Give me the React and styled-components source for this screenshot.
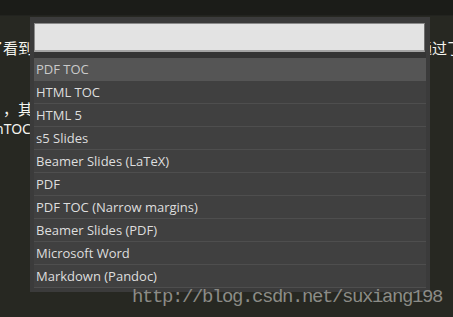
import React from "react";
import styled, { createGlobalStyle } from "styled-components";

const GlobalStyle = createGlobalStyle`
  html, body { margin: 0; padding: 0; background: #272822; overflow: hidden; }
`;

const Screen = styled.div`
  position: relative;
  width: 453px;
  height: 317px;
  overflow: hidden;
  background: #272822;
`;

const TopBar = styled.div`
  height: 15px;
  background: #1b1c18;
  border-bottom: 1px solid #22231f;
`;

const Editor = styled.div`
  width: 462px;
  padding-top: 22px;
  color: #f4f4ef;
  font-family: "Noto Sans CJK SC", "Noto Sans", sans-serif;
  font-size: 15px;
`;

const Line = styled.div`
  display: flex;
  align-items: center;
  height: 20.3px;
  line-height: 20px;
  white-space: nowrap;
`;

const Lead = styled.span`
  margin-left: ${(p) => p.$offset || 0}px;
  font-family: ${(p) =>
    p.$latin
      ? '"Noto Sans", "Noto Sans CJK SC", sans-serif'
      : '"Noto Sans CJK SC", sans-serif'};
  font-size: ${(p) => (p.$latin ? 14 : 15)}px;
`;

const RightPart = styled.span`
  margin-left: auto;
`;

const Popup = styled.div`
  position: absolute;
  left: 30px;
  top: 17px;
  width: 400px;
  height: 275px;
  box-sizing: border-box;
  padding: 6px 4px 4px 4px;
  background: #3b3b3b;
  display: flex;
  flex-direction: column;
`;

const SearchInput = styled.div`
  height: 29px;
  box-sizing: border-box;
  margin-right: 1px;
  background: #e3e3e3;
  border-top: 1px solid #8a8a8a;
  border-left: 1px solid #8a8a8a;
  border-right: 1px solid #6e6e6e;
  border-bottom: 2px solid #a5a5a5;
`;

const List = styled.div`
  border-top: 6px solid #353535;
  display: flex;
  flex-direction: column;
`;

const Item = styled.div`
  height: 22px;
  border-bottom: 1px solid ${(p) => (p.$active ? "#555555" : "#4e4e4e")};
  background: ${(p) => (p.$active ? "#555555" : "#404040")};
  color: ${(p) => (p.$active ? "#cacaca" : "#dedede")};
  font-family: "Open Sans", "Noto Sans", sans-serif;
  font-size: 13px;
  line-height: 22px;
  padding-left: 2px;
  white-space: nowrap;
`;

const Watermark = styled.div`
  position: absolute;
  left: 132px;
  top: 287px;
  font-family: "Liberation Mono", monospace;
  font-size: 19px;
  letter-spacing: -1.4px;
  line-height: 20px;
  color: #8c8c87;
  white-space: nowrap;
`;

const items = [
  "PDF TOC",
  "HTML TOC",
  "HTML 5",
  "s5 Slides",
  "Beamer Slides (LaTeX)",
  "PDF",
  "PDF TOC (Narrow margins)",
  "Beamer Slides (PDF)",
  "Microsoft Word",
  "Markdown (Pandoc)",
];

export default function App() {
  return (
    <>
      <GlobalStyle />
      <Screen>
        <TopBar />
        <Editor>
          <Line>
            <Lead $offset={-12}>了看到</Lead>
            <RightPart>通过了</RightPart>
          </Line>
          <Line />
          <Line />
          <Line>
            <Lead $offset={3}>，其</Lead>
          </Line>
          <Line>
            <Lead $offset={-5} $latin>
              nTOC了
            </Lead>
          </Line>
        </Editor>
        <Popup>
          <SearchInput />
          <List>
            {items.map((t, i) => (
              <Item key={t} $active={i === 0}>
                {t}
              </Item>
            ))}
          </List>
        </Popup>
        <Watermark>http://blog.csdn.net/suxiang198</Watermark>
      </Screen>
    </>
  );
}
